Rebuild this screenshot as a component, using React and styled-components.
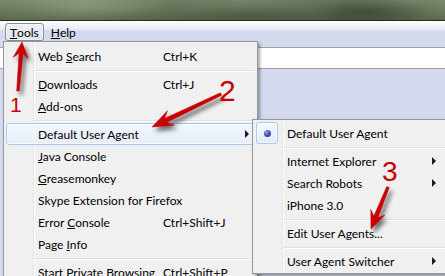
import React from "react";
import styled, { createGlobalStyle } from "styled-components";

const Global = createGlobalStyle`
  html, body { margin: 0; padding: 0; width: 445px; height: 276px; overflow: hidden; background: #d3daed; }
  #root { width: 445px; height: 276px; }
`;

const Window = styled.div`
  position: relative;
  width: 445px;
  height: 276px;
  overflow: hidden;
  display: flex;
  flex-direction: column;
  font-family: Lato, "Liberation Sans", sans-serif;
  font-size: 12px;
  color: #000;
  background: #d3daed;
`;

const Desktop = styled.div`
  flex: none;
  height: 20px;
  border-bottom: 1px solid #262b22;
  background:
    radial-gradient(ellipse 60px 14px at 370px 12px, rgba(40, 50, 35, 0.45), transparent),
    radial-gradient(ellipse 80px 12px at 90px 6px, rgba(160, 175, 140, 0.35), transparent),
    radial-gradient(ellipse 70px 10px at 250px 16px, rgba(50, 60, 40, 0.35), transparent),
    linear-gradient(to bottom, rgba(255, 255, 255, 0.05), rgba(0, 0, 0, 0.2)),
    linear-gradient(90deg, #728262 0%, #7c8c6a 18%, #687659 40%, #6e7c5e 55%, #5d6a51 78%, #748463 100%);
`;

const MenuBar = styled.div`
  flex: none;
  height: 26px;
  box-sizing: border-box;
  padding: 2px 0 0 5px;
  display: flex;
  align-items: flex-start;
  gap: 2px;
  background: linear-gradient(to bottom, #fcfdfe 0px, #eef2f9 6px, #e2e8f4 9px, #d3daed 10px);
`;

const MenuBarItem = styled.div`
  height: 18px;
  box-sizing: border-box;
  padding: 0 4px;
  display: flex;
  align-items: center;
  border: 1px solid ${(p) => (p.$open ? "#8b8e93" : "transparent")};
  border-radius: 3px;
  background: ${(p) => (p.$open ? "linear-gradient(to bottom, #eef1f5, #dfe3ea)" : "transparent")};
  box-shadow: ${(p) => (p.$open ? "inset 0 0 0 1px rgba(255,255,255,0.55)" : "none")};
`;

const Key = styled.span`
  text-decoration: underline;
  text-underline-offset: 1px;
`;

const NavBar = styled.div`
  flex: none;
  height: 20px;
  background: #fff;
  border-top: 1px solid #a3a3a6;
  border-bottom: 1px solid #a3a3a6;
`;

const Content = styled.div`
  flex: 1;
  background: #d3daed;
`;

const Menu = styled.div`
  position: absolute;
  left: ${(p) => p.$left}px;
  top: ${(p) => p.$top}px;
  width: ${(p) => p.$width}px;
  height: ${(p) => p.$height}px;
  box-sizing: border-box;
  padding: ${(p) => p.$pt}px 2px 1px 2px;
  border: 1px solid #979797;
  background-color: #f0f0f0;
  background-image: linear-gradient(
    to right,
    transparent 29px,
    #e2e3e3 29px,
    #e2e3e3 30px,
    #ffffff 30px,
    #ffffff 31px,
    transparent 31px
  );
  background-origin: padding-box;
  box-shadow: 2px 2px 3px rgba(0, 0, 0, 0.35);
  display: flex;
  flex-direction: column;
  z-index: ${(p) => p.$z};
`;

const Item = styled.div`
  flex: none;
  height: 22px;
  box-sizing: border-box;
  display: flex;
  align-items: center;
  border: 1px solid ${(p) => (p.$active ? "#a9c8ee" : "transparent")};
  border-radius: 3px;
  background: ${(p) => (p.$active ? "linear-gradient(to bottom, #f2f6fc, #e6eefa)" : "transparent")};
  box-shadow: ${(p) => (p.$active ? "inset 0 0 0 1px rgba(255,255,255,0.6)" : "none")};
  white-space: nowrap;
`;

const IconCell = styled.div`
  flex: none;
  width: 31px;
  height: 100%;
  display: flex;
  align-items: center;
`;

const CheckBox = styled.div`
  width: 22px;
  height: 22px;
  margin: -1px 0;
  box-sizing: border-box;
  border: 1px solid #a9c8ee;
  border-radius: 3px;
  background: linear-gradient(to bottom, #f4f8fd, #e3ecf9);
  box-shadow: inset 0 0 0 1px rgba(255, 255, 255, 0.7);
  display: flex;
  align-items: center;
  justify-content: center;
`;

const Bullet = styled.div`
  width: 7px;
  height: 7px;
  border-radius: 50%;
  background: radial-gradient(circle at 35% 30%, #9aa6ee 0%, #4a57b5 45%, #1d2675 100%);
`;

const Label = styled.span`
  flex: ${(p) => (p.$w ? "none" : "1")};
  width: ${(p) => (p.$w ? `${p.$w}px` : "auto")};
`;

const Shortcut = styled.span`
  flex: 1;
`;

const SubArrow = styled.span`
  flex: none;
  width: 0;
  height: 0;
  margin-right: ${(p) => p.$mr}px;
  border-left: 4px solid #1a1a1a;
  border-top: 4px solid transparent;
  border-bottom: 4px solid transparent;
`;

const Separator = styled.div`
  flex: none;
  height: 6px;
  margin-left: 28px;
  background: linear-gradient(
    to bottom,
    transparent 3px,
    #e0e0e0 3px,
    #e0e0e0 4px,
    #ffffff 4px,
    #ffffff 5px,
    transparent 5px
  );
`;

const Annotations = styled.svg`
  position: absolute;
  left: 0;
  top: 0;
  width: 445px;
  height: 276px;
  pointer-events: none;
  z-index: 10;
`;

function arrowPoints([x1, y1], [x2, y2], headLen, headHalf, tailHalf, neckHalf) {
  const dx = x2 - x1;
  const dy = y2 - y1;
  const L = Math.hypot(dx, dy);
  const ux = dx / L;
  const uy = dy / L;
  const nx = -uy;
  const ny = ux;
  const bx = x2 - ux * headLen;
  const by = y2 - uy * headLen;
  const nkx = x2 - ux * headLen * 0.72;
  const nky = y2 - uy * headLen * 0.72;
  const pts = [
    [x1 + nx * tailHalf, y1 + ny * tailHalf],
    [nkx + nx * neckHalf, nky + ny * neckHalf],
    [bx + nx * headHalf, by + ny * headHalf],
    [x2, y2],
    [bx - nx * headHalf, by - ny * headHalf],
    [nkx - nx * neckHalf, nky - ny * neckHalf],
    [x1 - nx * tailHalf, y1 - ny * tailHalf],
  ];
  return pts.map((p) => p.map((v) => v.toFixed(1)).join(",")).join(" ");
}

const arrows = [
  { from: [18, 91], to: [22, 42], head: 16, half: 7.5, tail: 1.3, neck: 2 },
  { from: [221, 94], to: [152, 127], head: 21, half: 8, tail: 1.3, neck: 2.3 },
  { from: [388, 187], to: [371, 229], head: 18, half: 7.5, tail: 1.3, neck: 2.2 },
];

const labels = [
  { x: 10, y: 112, size: 21, text: "1" },
  { x: 219, y: 101, size: 30, text: "2" },
  { x: 382, y: 181, size: 28, text: "3" },
];

const mainItems = [
  { type: "item", label: ["Web ", <Key key="s">S</Key>, "earch"], shortcut: "Ctrl+K" },
  { type: "sep" },
  { type: "item", label: [<Key key="d">D</Key>, "ownloads"], shortcut: "Ctrl+J" },
  { type: "item", label: [<Key key="a">A</Key>, "dd-ons"] },
  { type: "sep" },
  { type: "item", label: ["Default User Agent"], active: true, sub: true },
  { type: "item", label: [<Key key="j">J</Key>, "ava Console"] },
  { type: "item", label: [<Key key="g">G</Key>, "reasemonkey"] },
  { type: "item", label: ["Skype Extension for Firefox"] },
  { type: "item", label: ["Error ", <Key key="c">C</Key>, "onsole"], shortcut: "Ctrl+Shift+J" },
  { type: "item", label: ["Page ", <Key key="i">I</Key>, "nfo"] },
  { type: "sep" },
  { type: "item", label: ["Start Private Browsing"], shortcut: "Ctrl+Shift+P" },
];

const subItems = [
  { type: "item", label: "Default User Agent", checked: true },
  { type: "sep" },
  { type: "item", label: "Internet Explorer", sub: true },
  { type: "item", label: "Search Robots", sub: true },
  { type: "item", label: "iPhone 3.0" },
  { type: "sep" },
  { type: "item", label: "Edit User Agents..." },
  { type: "sep" },
  { type: "item", label: "User Agent Switcher", sub: true },
];

export default function App() {
  return (
    <>
      <Global />
      <Window>
        <Desktop />
        <MenuBar>
          <MenuBarItem $open>
            <Key>T</Key>ools
          </MenuBarItem>
          <MenuBarItem>
            <Key>H</Key>elp
          </MenuBarItem>
        </MenuBar>
        <NavBar />
        <Content />

        <Menu $left={3} $top={41} $width={255} $height={260} $pt={3} $z={2}>
          {mainItems.map((it, i) =>
            it.type === "sep" ? (
              <Separator key={i} />
            ) : (
              <Item key={i} $active={it.active}>
                <IconCell />
                <Label $w={125}>{it.label}</Label>
                <Shortcut>{it.shortcut || ""}</Shortcut>
                {it.sub && <SubArrow $mr={5} />}
              </Item>
            )
          )}
        </Menu>

        <Menu $left={252} $top={119} $width={200} $height={155} $pt={2} $z={3}>
          {subItems.map((it, i) =>
            it.type === "sep" ? (
              <Separator key={i} />
            ) : (
              <Item key={i}>
                <IconCell>
                  {it.checked && (
                    <CheckBox>
                      <Bullet />
                    </CheckBox>
                  )}
                </IconCell>
                <Label>{it.label}</Label>
                {it.sub && <SubArrow $mr={12} />}
              </Item>
            )
          )}
        </Menu>

        <Annotations viewBox="0 0 445 276">
          <defs>
            <filter id="shadow" x="-50%" y="-50%" width="200%" height="200%">
              <feDropShadow dx="3" dy="4" stdDeviation="2" floodColor="#000" floodOpacity="0.55" />
            </filter>
          </defs>
          {arrows.map((a, i) => (
            <polygon
              key={i}
              points={arrowPoints(a.from, a.to, a.head, a.half, a.tail, a.neck)}
              fill="#cc0000"
              stroke="#b00000"
              strokeWidth="0.5"
              filter="url(#shadow)"
            />
          ))}
          {labels.map((l, i) => (
            <text
              key={i}
              x={l.x}
              y={l.y}
              fontSize={l.size}
              fontFamily="'Liberation Sans', Arial, sans-serif"
              fill="#c80000"
            >
              {l.text}
            </text>
          ))}
        </Annotations>
      </Window>
    </>
  );
}
